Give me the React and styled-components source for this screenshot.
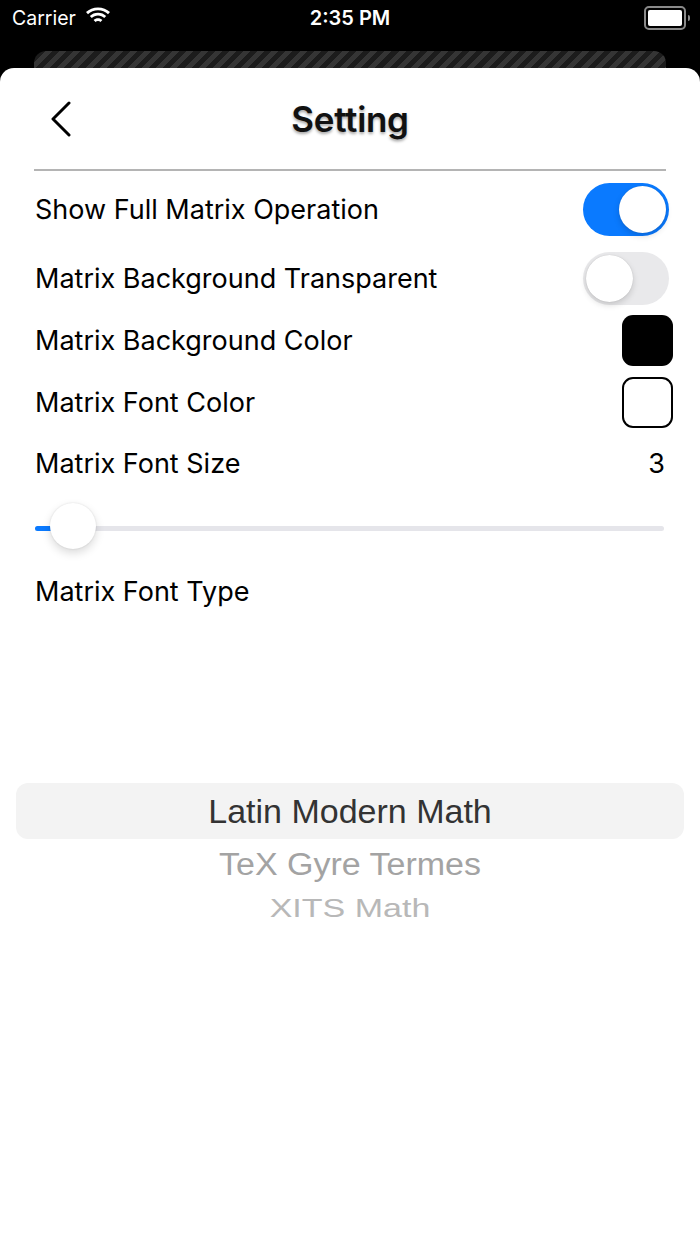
import React from "react";
import styled, { createGlobalStyle } from "styled-components";

const fontTypes = ["Latin Modern Math", "TeX Gyre Termes", "XITS Math"];

const GlobalStyle = createGlobalStyle`
  html, body {
    margin: 0;
    padding: 0;
    background: #000;
  }
  body {
    font-family: Inter, "Open Sans", sans-serif;
  }
`;

const App = () => {
  return (
    <Screen>
      <GlobalStyle />
      <StatusBar>
        <Carrier>
          Carrier
          <svg width="26" height="19" viewBox="0 0 26 19">
            <path
              d="M13 3.2c3.9 0 7.4 1.5 10 4l2-2.1C21.9 2.1 17.7.4 13 .4S4.1 2.1 1 5.1l2 2.1c2.6-2.5 6.1-4 10-4z"
              fill="#fff"
            />
            <path
              d="M13 8.6c2.4 0 4.6.9 6.2 2.5l2-2.1c-2.1-2.1-5-3.3-8.2-3.3S6.9 6.9 4.8 9l2 2.1c1.6-1.6 3.8-2.5 6.2-2.5z"
              fill="#fff"
            />
            <path
              d="M13 13.9c1 0 1.8.4 2.5 1l-2.5 2.7-2.5-2.7c.7-.6 1.5-1 2.5-1z M13 11.2c-1.7 0-3.2.6-4.4 1.7l4.4 4.7 4.4-4.7c-1.2-1.1-2.7-1.7-4.4-1.7z"
              fill="#fff"
            />
          </svg>
        </Carrier>
        <Clock>2:35 PM</Clock>
        <Battery>
          <BatteryBody>
            <BatteryLevel />
          </BatteryBody>
          <BatteryCap />
        </Battery>
      </StatusBar>

      <BehindCard />

      <Sheet>
        <Header>
          <BackButton aria-label="back">
            <svg width="22" height="36" viewBox="0 0 22 36">
              <path
                d="M19 2L3 18l16 16"
                fill="none"
                stroke="#000"
                strokeWidth="3"
                strokeLinecap="round"
                strokeLinejoin="round"
              />
            </svg>
          </BackButton>
          <Title>Setting</Title>
        </Header>
        <Divider />

        <List>
          <Row $h={76}>
            <Label>Show Full Matrix Operation</Label>
            <Toggle $on>
              <Knob $on />
            </Toggle>
          </Row>
          <Row $h={62}>
            <Label>Matrix Background Transparent</Label>
            <Toggle>
              <Knob />
            </Toggle>
          </Row>
          <Row $h={62}>
            <Label>Matrix Background Color</Label>
            <Swatch $color="#000" />
          </Row>
          <Row $h={62}>
            <Label>Matrix Font Color</Label>
            <Swatch $color="#fff" $outlined />
          </Row>
          <Row $h={60}>
            <Label>Matrix Font Size</Label>
            <Value>3</Value>
          </Row>
          <SliderRow>
            <Track>
              <Fill style={{ width: "4%" }} />
              <Thumb style={{ left: "calc(4% - 10px)" }} />
            </Track>
          </SliderRow>
          <Row $h={72}>
            <Label>Matrix Font Type</Label>
          </Row>
        </List>

        <Picker>
          <Selected>{fontTypes[0]}</Selected>
          {fontTypes.slice(1).map((name, i) => (
            <PickerItem key={name} $depth={i + 1}>
              {name}
            </PickerItem>
          ))}
        </Picker>
      </Sheet>
    </Screen>
  );
};

const Screen = styled.div`
  width: 700px;
  height: 1244px;
  background: #000;
  overflow: hidden;
  display: flex;
  flex-direction: column;
`;

const StatusBar = styled.div`
  height: 36px;
  display: flex;
  align-items: center;
  justify-content: space-between;
  padding: 0 10px 0 12px;
  color: #fff;
  position: relative;
`;

const Carrier = styled.div`
  display: flex;
  align-items: center;
  gap: 9px;
  font-size: 19.5px;
  svg {
    margin-top: -3px;
  }
`;

const Clock = styled.div`
  position: absolute;
  left: 0;
  right: 0;
  text-align: center;
  font-size: 20px;
  font-weight: 600;
  pointer-events: none;
`;

const Battery = styled.div`
  display: flex;
  align-items: center;
  gap: 2px;
`;

const BatteryBody = styled.div`
  width: 34px;
  height: 16px;
  border: 2px solid #8a8a8a;
  border-radius: 5px;
  padding: 2px;
  box-sizing: content-box;
  display: flex;
`;

const BatteryLevel = styled.div`
  flex: 1;
  background: #fff;
  border-radius: 2px;
`;

const BatteryCap = styled.div`
  width: 2px;
  height: 6px;
  background: #8a8a8a;
  border-radius: 0 2px 2px 0;
`;

const BehindCard = styled.div`
  margin: 15px 34px 0;
  height: 30px;
  border-radius: 12px 12px 0 0;
  background: repeating-linear-gradient(
    -45deg,
    #1c1c1c 0 5px,
    #353535 5px 10px
  );
`;

const Sheet = styled.div`
  margin-top: -13px;
  flex: 1;
  background: #fff;
  border-radius: 14px 14px 0 0;
  display: flex;
  flex-direction: column;
`;

const Header = styled.div`
  height: 101px;
  display: flex;
  align-items: center;
  justify-content: center;
  position: relative;
`;

const BackButton = styled.button`
  position: absolute;
  left: 50px;
  top: 33px;
  border: 0;
  background: none;
  padding: 0;
  display: flex;
`;

const Title = styled.h1`
  margin: 0;
  font-size: 35px;
  font-weight: 600;
  color: #111;
  letter-spacing: -0.3px;
  text-shadow: 0 2px 3px rgba(0, 0, 0, 0.35);
`;

const Divider = styled.div`
  margin: 0 34px;
  height: 2px;
  background: #b4b4b4;
`;

const List = styled.div`
  display: flex;
  flex-direction: column;
  padding: 0 27px 0 35px;
`;

const Row = styled.div`
  height: ${(p) => p.$h}px;
  display: flex;
  align-items: center;
  justify-content: space-between;
`;

const Label = styled.span`
  font-size: 27px;
  color: #000;
`;

const Value = styled.span`
  font-size: 27px;
  color: #000;
  margin-right: 8px;
`;

const Toggle = styled.div`
  width: 86px;
  height: 53px;
  border-radius: 27px;
  background: ${(p) => (p.$on ? "#0a7aff" : "#e9e9eb")};
  display: flex;
  align-items: center;
  justify-content: ${(p) => (p.$on ? "flex-end" : "flex-start")};
  padding: 0 3px;
  box-sizing: border-box;
  margin-right: 4px;
`;

const Knob = styled.div`
  width: 47px;
  height: 47px;
  border-radius: 50%;
  background: #fff;
  box-shadow: 0 3px 6px rgba(0, 0, 0, 0.15), 0 0 1px rgba(0, 0, 0, 0.2);
`;

const Swatch = styled.div`
  width: 51px;
  height: 51px;
  border-radius: 11px;
  box-sizing: border-box;
  background: ${(p) => p.$color};
  border: ${(p) => (p.$outlined ? "2px solid #000" : "none")};
`;

const SliderRow = styled.div`
  height: 62px;
  display: flex;
  align-items: center;
  padding: 8px 9px 0 0;
  box-sizing: border-box;
`;

const Track = styled.div`
  position: relative;
  flex: 1;
  height: 5px;
  border-radius: 3px;
  background: #e5e5ea;
`;

const Fill = styled.div`
  height: 100%;
  border-radius: 3px;
  background: #0a7aff;
`;

const Thumb = styled.div`
  position: absolute;
  top: 50%;
  width: 46px;
  height: 46px;
  margin-top: -25px;
  border-radius: 50%;
  background: #fff;
  box-shadow: 0 4px 10px rgba(0, 0, 0, 0.15), 0 0 2px rgba(0, 0, 0, 0.12);
`;

const Picker = styled.div`
  margin-top: 156px;
  padding: 0 16px;
  display: flex;
  flex-direction: column;
  align-items: center;
  font-family: "Liberation Sans", Arial, sans-serif;
`;

const Selected = styled.div`
  align-self: stretch;
  height: 56px;
  border-radius: 12px;
  background: #f3f3f3;
  display: flex;
  align-items: center;
  justify-content: center;
  font-size: 34px;
  color: #333;
`;

const PickerItem = styled.div`
  font-size: 34px;
  color: ${(p) => (p.$depth === 1 ? "#a3a3a3" : "#b8b8b8")};
  transform: scaleY(${(p) => (p.$depth === 1 ? 0.93 : 0.76)});
  line-height: ${(p) => (p.$depth === 1 ? 50 : 42)}px;
  margin-top: ${(p) => (p.$depth === 1 ? 0 : -2)}px;
`;

export default App;
